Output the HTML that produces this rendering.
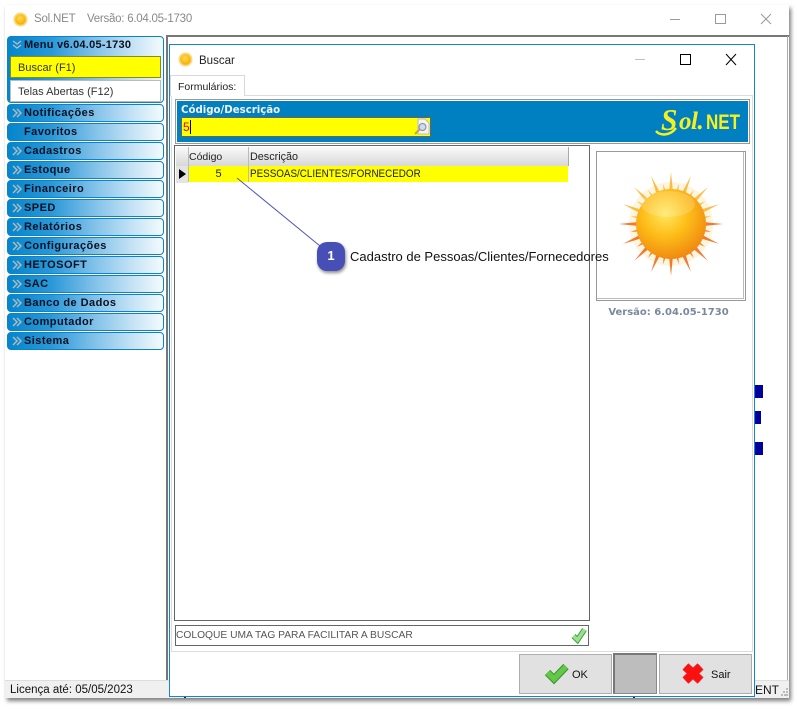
<!DOCTYPE html>
<html><head><meta charset="utf-8"><style>
html,body{margin:0;padding:0;background:#fff;width:798px;height:709px;overflow:hidden}
div,span{position:absolute;box-sizing:border-box;white-space:nowrap}
body{font-family:"Liberation Sans",sans-serif;font-size:11px;color:#111}
.m{left:7px;width:157px;height:18px;border:1px solid #0a84c8;border-radius:4px;background:linear-gradient(90deg,#0585cc 0%,#2a98d8 28%,#7fc0e8 55%,#c4e2f5 80%,#f4fafd 100%);font:bold 11px/16px "Liberation Sans",sans-serif;color:#0a1020;padding-left:16px;letter-spacing:.45px}
.m svg{position:absolute;left:4px;top:3px}
.m path,.h path{fill:none;stroke:#b4bcbc;stroke-width:1.4}
</style></head><body>
<div style="left:5px;top:5px;width:784px;height:693px;background:#fff;box-shadow:2px 3px 4px rgba(0,0,0,.5)"></div>
<svg style="position:absolute;left:13px;top:12px" width="15" height="15" viewBox="0 0 15 15"><defs><radialGradient id="s0" cx=".45" cy=".4" r=".6"><stop offset="0" stop-color="#ffe050"/><stop offset="1" stop-color="#fca800"/></radialGradient></defs><circle cx="7.500" cy="7.500" r="7" fill="#fdd880"/><circle cx="7.500" cy="7.500" r="5.300" fill="url(#s0)"/></svg>
<div style="left:34px;top:12px;font-size:11.500px;letter-spacing:-.2px;line-height:15px;color:#8a8a8a">Sol.NET</div>
<div style="left:87px;top:12px;font-size:11.500px;letter-spacing:-.25px;line-height:15px;color:#8a8a8a">Versão: 6.04.05-1730</div>
<svg style="position:absolute;left:660px;top:8px" width="125" height="22" fill="none" stroke="#9a9a9a" stroke-width="1"><path d="M10 11.500H20M55.500 6.500H65.500V15.500H55.500ZM101 6L111 16M111 6L101 16"/></svg>
<div style="left:166px;top:35px;width:623px;height:2px;background:#777"></div>
<div style="left:166px;top:36px;width:2px;height:644px;background:#777"></div>
<div style="left:787px;top:36px;width:1px;height:644px;background:#aaa"></div>

<div style="left:7px;top:36px;width:157px;height:67px;border:1px solid #0a84c8;border-radius:4px;background:linear-gradient(90deg,#0585cc 0%,#2a98d8 28%,#7fc0e8 55%,#c4e2f5 80%,#f4fafd 100%)"></div>
<div style="left:24px;top:37px;font:bold 11px/16px 'Liberation Sans',sans-serif;color:#0a1020;letter-spacing:.25px">Menu v6.04.05-1730</div>
<svg class="h" style="position:absolute;left:12px;top:40px" width="10" height="9"><path d="M1 1L5 4L9 1M1 5L5 8L9 5"/></svg>
<div style="left:10px;top:56px;width:151px;height:22px;background:#ff0;border:1px solid #8a8a20;line-height:22px;padding-left:7px;color:#333;font-size:11px">Buscar (F1)</div>
<div style="left:10px;top:80px;width:151px;height:22px;background:#fff;border:1px solid #bbb;line-height:22px;padding-left:7px;color:#333;font-size:11px">Telas Abertas (F12)</div>

<div class="m" style="top:104px"><svg width="10" height="10"><path d="M1 1L5 5L1 9M5 1L9 5L5 9"/></svg>Notificações</div>
<div class="m" style="top:123px">Favoritos</div>
<div class="m" style="top:142px"><svg width="10" height="10"><path d="M1 1L5 5L1 9M5 1L9 5L5 9"/></svg>Cadastros</div>
<div class="m" style="top:161px"><svg width="10" height="10"><path d="M1 1L5 5L1 9M5 1L9 5L5 9"/></svg>Estoque</div>
<div class="m" style="top:180px"><svg width="10" height="10"><path d="M1 1L5 5L1 9M5 1L9 5L5 9"/></svg>Financeiro</div>
<div class="m" style="top:199px"><svg width="10" height="10"><path d="M1 1L5 5L1 9M5 1L9 5L5 9"/></svg>SPED</div>
<div class="m" style="top:218px"><svg width="10" height="10"><path d="M1 1L5 5L1 9M5 1L9 5L5 9"/></svg>Relatórios</div>
<div class="m" style="top:237px"><svg width="10" height="10"><path d="M1 1L5 5L1 9M5 1L9 5L5 9"/></svg>Configurações</div>
<div class="m" style="top:256px"><svg width="10" height="10"><path d="M1 1L5 5L1 9M5 1L9 5L5 9"/></svg>HETOSOFT</div>
<div class="m" style="top:275px"><svg width="10" height="10"><path d="M1 1L5 5L1 9M5 1L9 5L5 9"/></svg>SAC</div>
<div class="m" style="top:294px"><svg width="10" height="10"><path d="M1 1L5 5L1 9M5 1L9 5L5 9"/></svg>Banco de Dados</div>
<div class="m" style="top:313px"><svg width="10" height="10"><path d="M1 1L5 5L1 9M5 1L9 5L5 9"/></svg>Computador</div>
<div class="m" style="top:332px"><svg width="10" height="10"><path d="M1 1L5 5L1 9M5 1L9 5L5 9"/></svg>Sistema</div>

<div style="left:5px;top:680px;width:784px;height:18px;background:#f0f0f0;border-top:1px solid #ddd"></div>
<div style="left:10px;top:683px;font-size:11.500px;line-height:15px;color:#111">Licença até: 05/05/2023</div>
<div style="left:755px;top:683px;font-size:12px;line-height:15px;color:#111">ENT</div>
<svg style="position:absolute;left:781px;top:688px" width="7" height="8" fill="#bbb"><rect x="5" y="0" width="2" height="2"/><rect x="2" y="3" width="2" height="2"/><rect x="5" y="3" width="2" height="2"/><rect x="0" y="6" width="2" height="2"/><rect x="3" y="6" width="2" height="2"/><rect x="5" y="6" width="2" height="2"/></svg>

<div style="left:755px;top:385px;width:8px;height:13px;background:#00009c"></div>
<div style="left:755px;top:411px;width:6px;height:13px;background:#00009c"></div>
<div style="left:755px;top:442px;width:8px;height:13px;background:#00009c"></div>
<div style="left:184px;top:696px;width:2px;height:2px;background:#222"></div>
<div style="left:633px;top:696px;width:2px;height:2px;background:#222"></div>

<div style="left:169px;top:44px;width:586px;height:653px;background:#fff;border:1px solid #1583d8"></div>
<svg style="position:absolute;left:178px;top:52px" width="15" height="15" viewBox="0 0 15 15"><circle cx="7.500" cy="7.500" r="7" fill="#fdd880"/><circle cx="7.500" cy="7.500" r="5.300" fill="url(#s0)"/></svg>
<div style="left:199px;top:54px;font-size:11.500px;line-height:14px;color:#222">Buscar</div>
<svg style="position:absolute;left:630px;top:50px" width="115" height="20" fill="none" stroke="#000" stroke-width="1"><path d="M5 9.500H15" stroke="#c0c0c0"/><path d="M50.500 4.500H60.500V14.500H50.500ZM96 4L106 15M106 4L96 15"/></svg>

<div style="left:171px;top:95px;width:582px;height:557px;border:1px solid #ddd;background:#fff"></div>
<div style="left:170px;top:75px;width:75px;height:21px;background:#fff;border:1px solid #d8d8d8;border-bottom:0;line-height:22px;padding-left:7px;color:#222;font-size:10.500px">Formulários:</div>

<div style="left:175px;top:99px;width:575px;height:45px;border:1px solid #999;background:#0080c0;box-shadow:inset 0 0 0 1px #fff"></div>
<div style="left:181px;top:104px;font:bold 10.200px/14px 'DejaVu Sans',sans-serif;color:#f2f2f2">Código/Descrição</div>
<div style="left:181px;top:117px;width:250px;height:20px;background:#ff0;border:1px solid #665;font-size:12px;line-height:18px;color:#e00000;padding-left:1px">5<span style="left:8px;top:2px;width:1px;height:14px;background:#000"></span></div>
<svg style="position:absolute;left:413px;top:118px" width="17" height="18"><path d="M5 1H12L16 5V16H5Z" fill="#f4f4f4" stroke="#bbc"/><circle cx="9.500" cy="9" r="3.500" fill="#cde" stroke="#889"/><path d="M6.500 11.500L2 16" stroke="#c8a050" stroke-width="2"/></svg>

<svg style="position:absolute;left:654px;top:125px" width="30" height="12" fill="none"><path d="M2 6C6 11 16 11 22 3" stroke="#f6f01e" stroke-width="2.500"/></svg>
<div style="left:661px;top:104px;font:italic bold 31px/32px 'Liberation Serif',serif;color:#f6f01e;transform:scaleX(.95);transform-origin:0 0">S</div>
<div style="left:679px;top:108px;font:italic bold 25px/27px 'Liberation Serif',serif;color:#f6f01e;letter-spacing:-.5px">ol.</div>
<div style="left:706px;top:111px;font:bold 21px/23px 'Liberation Sans',sans-serif;color:#f6f01e;transform:scaleX(.81);transform-origin:0 0">NET</div>

<div style="left:174px;top:145px;width:416px;height:476px;background:#fff;border:1px solid #666"></div>
<div style="left:176px;top:147px;width:393px;height:19px;background:linear-gradient(#fafafa,#d8d8d8);border-right:1px solid #aaa"></div>
<div style="left:188px;top:147px;width:1px;height:35px;background:#bbb"></div>
<div style="left:248px;top:147px;width:1px;height:35px;background:#bbb"></div>
<div style="left:189px;top:150px;line-height:15px;color:#222;font-size:10.500px">Código</div>
<div style="left:250px;top:150px;line-height:15px;color:#222;font-size:10.800px">Descrição</div>
<div style="left:176px;top:166px;width:12px;height:17px;background:#e4e4e4"></div>
<div style="left:179px;top:169px;width:0;height:0;border-left:7px solid #000;border-top:5.500px solid transparent;border-bottom:5.500px solid transparent"></div>
<div style="left:189px;top:166px;width:59px;height:16px;background:#ff0;text-align:center;line-height:17px;font-size:11px;color:#222">5</div>
<div style="left:249px;top:166px;width:319px;height:16px;background:#ff0"></div>
<div style="left:250px;top:166px;line-height:17px;font-size:11px;color:#222;transform:scaleX(.895);transform-origin:0 0">PESSOAS/CLIENTES/FORNECEDOR</div>

<div style="left:596px;top:151px;width:150px;height:150px;border:1px solid #999;box-shadow:inset -1px -1px 0 #fff,inset -2px -2px 0 #bbb;background:#fff"></div>
<svg style="position:absolute;left:611px;top:164px" width="120" height="120" viewBox="-60 -60 120 120">
<defs>
<radialGradient id="b" cx=".42" cy=".35" r=".72"><stop offset="0" stop-color="#ffe860"/><stop offset=".45" stop-color="#fdbe18"/><stop offset="1" stop-color="#ee8010"/></radialGradient>
<polygon id="l" points="-2.200,-30 0,-52 2.200,-30"/><polygon id="t" points="-1.600,-30 0,-41 1.600,-30"/>
</defs>
<circle r="42" fill="#ffe9b8" opacity=".45"/>
<g fill="#fbbc40"><use href="#l"/><use href="#l" transform="rotate(22.500)"/><use href="#l" transform="rotate(45)"/><use href="#l" transform="rotate(67.500)"/><use href="#l" transform="rotate(-22.500)"/><use href="#l" transform="rotate(-45)"/><use href="#l" transform="rotate(-67.500)"/>
<use href="#t" transform="rotate(11)"/><use href="#t" transform="rotate(34)"/><use href="#t" transform="rotate(56)"/><use href="#t" transform="rotate(79)"/><use href="#t" transform="rotate(-11)"/><use href="#t" transform="rotate(-34)"/><use href="#t" transform="rotate(-56)"/><use href="#t" transform="rotate(-79)"/></g>
<g fill="#f27a30"><use href="#l" transform="rotate(90)"/><use href="#l" transform="rotate(112.500)"/><use href="#l" transform="rotate(135)"/><use href="#l" transform="rotate(157.500)"/><use href="#l" transform="rotate(180)"/><use href="#l" transform="rotate(202.500)"/><use href="#l" transform="rotate(225)"/><use href="#l" transform="rotate(247.500)"/><use href="#l" transform="rotate(270)"/>
<use href="#t" transform="rotate(101)"/><use href="#t" transform="rotate(124)"/><use href="#t" transform="rotate(146)"/><use href="#t" transform="rotate(169)"/><use href="#t" transform="rotate(191)"/><use href="#t" transform="rotate(214)"/><use href="#t" transform="rotate(236)"/><use href="#t" transform="rotate(259)"/></g>
<circle r="35" fill="url(#b)"/>
<ellipse cx="-3" cy="-20" rx="27" ry="13" fill="#fff" opacity=".18"/>
</svg>
<div style="left:596px;top:306px;width:145px;text-align:center;font:bold 10px/14px 'DejaVu Sans',sans-serif;color:#7a8a9c">Versão: 6.04.05-1730</div>

<div style="left:175px;top:625px;width:414px;height:21px;border:1px solid #666;background:#fff;line-height:19px;padding-left:0;font-size:10.250px;color:#555">COLOQUE UMA TAG PARA FACILITAR A BUSCAR</div>
<svg style="position:absolute;left:570px;top:626px" width="18" height="18" fill="none"><path d="M3.500 10L7.500 14L14.500 3.500" stroke="#3fa040" stroke-width="5.500"/><path d="M3.500 10L7.500 14L14.500 3.500" stroke="#9be08c" stroke-width="3.500"/></svg>

<div style="left:519px;top:654px;width:93px;height:40px;background:#e1e1e1;border:1px solid #adadad"></div>
<svg style="position:absolute;left:543px;top:662px" width="27" height="23" fill="none"><path d="M4.500 10.500L11 17L23 4.500" stroke="#3a9030" stroke-width="7.500"/><path d="M4.500 10.500L11 17L23 4.500" stroke="#62c846" stroke-width="5.500"/></svg>
<div style="left:572px;top:668px;font-size:11px;line-height:14px;color:#111">OK</div>
<div style="left:613px;top:653px;width:44px;height:41px;background:#bdbdbd;border:1px solid #8a8a8a;border-top:2px solid #777;border-left:2px solid #777"></div>
<div style="left:659px;top:654px;width:93px;height:40px;background:#e1e1e1;border:1px solid #adadad"></div>
<svg style="position:absolute;left:681px;top:662px" width="24" height="23" fill="none"><path d="M4.500 4.500L19.500 18.500M19.500 4.500L4.500 18.500" stroke="#e04040" stroke-width="9"/><path d="M4.500 4.500L19.500 18.500M19.500 4.500L4.500 18.500" stroke="#fb1010" stroke-width="7.500"/></svg>
<div style="left:711px;top:668px;font-size:11px;line-height:14px;color:#111">Sair</div>

<svg style="position:absolute;left:230px;top:170px" width="100" height="90" fill="none"><path d="M7 8L90 76" stroke="#5058b8" stroke-width="1"/></svg>
<div style="left:317px;top:242px;width:28px;height:29px;border-radius:10px;background:#464fb5;box-shadow:1px 2px 3px rgba(0,0,0,.45);color:#fff;font:bold 13px/28px 'Liberation Sans',sans-serif;text-align:center">1</div>
<div style="left:350px;top:249px;font-size:13px;line-height:15px;color:#111">Cadastro de Pessoas/Clientes/Fornecedores</div>
</body></html>
